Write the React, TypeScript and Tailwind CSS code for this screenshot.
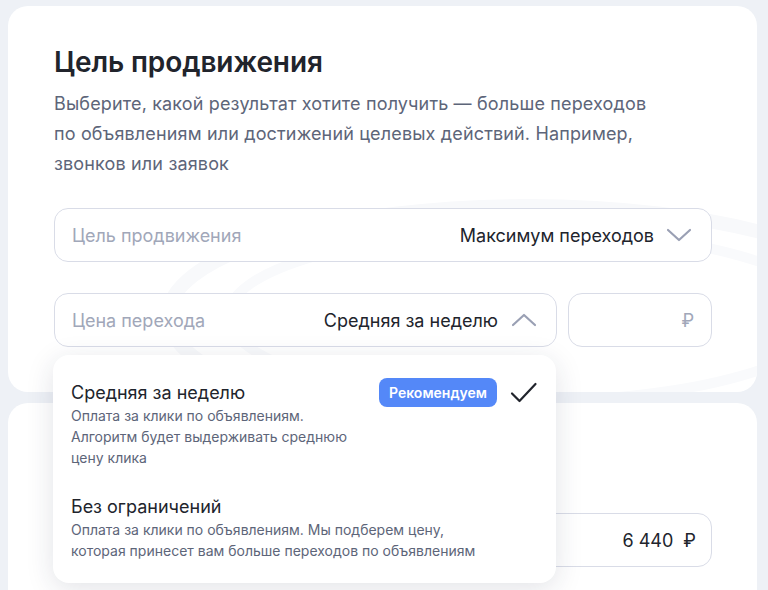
import React from "react";

const Chevron = ({ up = false }: { up?: boolean }) => (
  <svg width="26" height="16" viewBox="0 0 26 16" fill="none" className="shrink-0">
    <path
      d={up ? "M2 13 L13 3 L24 13" : "M2 3 L13 13 L24 3"}
      stroke="#9aa0b4"
      strokeWidth="2.2"
      strokeLinecap="round"
      strokeLinejoin="round"
    />
  </svg>
);

const Check = () => (
  <svg width="28" height="24" viewBox="0 0 28 24" fill="none">
    <path d="M2 12.5 L9.5 20 L25.5 3" stroke="#21242c" strokeWidth="2.2" strokeLinecap="round" strokeLinejoin="round" />
  </svg>
);

export default function App() {
  return (
    <div
      className="w-[768px] h-[590px] overflow-hidden bg-[#eef1f6] pl-[8px] pr-[11px] pt-[6px] flex flex-col gap-[11px] relative"
      style={{ fontFamily: "Inter, 'Noto Sans', sans-serif" }}
    >
      {/* Card 1 */}
      <div className="h-[386px] shrink-0 rounded-[20px] bg-white pl-[46px] pr-[45px] pt-[38px] relative overflow-hidden">
        <svg className="absolute left-0 top-0 pointer-events-none" width="749" height="386" viewBox="0 0 749 386" fill="none">
          <ellipse cx="520" cy="310" rx="360" ry="110" stroke="#f8f9fb" strokeWidth="14" />
          <ellipse cx="520" cy="310" rx="300" ry="85" stroke="#f9fafc" strokeWidth="10" />
        </svg>
        <h1 className="relative text-[28px] leading-[36px] font-semibold text-[#21242c] tracking-[-0.1px]">
          Цель продвижения
        </h1>
        <p className="relative mt-[9px] text-[18px] leading-[30px] text-[#5d6579] tracking-[0.15px]">
          Выберите, какой результат хотите получить — больше переходов
          <br />
          по объявлениям или достижений целевых действий. Например,
          <br />
          звонков или заявок
        </p>
        <div className="relative mt-[29px] h-[54px] rounded-[14px] border border-[#d9dce7] bg-white flex items-center pl-[17px] pr-[19px]">
          <span className="text-[18px] text-[#a1a7b9]">Цель продвижения</span>
          <span className="ml-auto text-[18px] text-[#21242c]">Максимум переходов</span>
          <span className="ml-[12px]"><Chevron /></span>
        </div>
        <div className="relative mt-[31px] flex gap-[11px]">
          <div className="w-[503px] h-[54px] rounded-[14px] border border-[#d9dce7] bg-white flex items-center pl-[17px] pr-[19px]">
            <span className="text-[18px] text-[#a1a7b9]">Цена перехода</span>
            <span className="ml-auto text-[18px] text-[#21242c]">Средняя за неделю</span>
            <span className="ml-[13px]"><Chevron up /></span>
          </div>
          <div className="flex-1 h-[54px] rounded-[14px] border border-[#d9dce7] bg-white flex items-center justify-end pr-[17px]">
            <span className="text-[18px] text-[#a1a7b9]">₽</span>
          </div>
        </div>
      </div>

      {/* Card 2 */}
      <div className="flex-1 rounded-t-[20px] bg-white pl-[45px] pr-[45px] pt-[110px]">
        <div className="h-[54px] rounded-[14px] border border-[#d9dce7] bg-white flex items-center justify-end pr-[15px]">
          <span className="text-[18px] text-[#21242c]">6 440&nbsp;&nbsp;₽</span>
        </div>
      </div>

      {/* Dropdown */}
      <div className="absolute left-[53px] top-[355px] w-[503px] h-[228px] rounded-[16px] bg-white shadow-[0_6px_28px_rgba(30,40,70,0.13)] pl-[18px] pr-[18px] pt-[26px]">
        <div className="flex items-start">
          <div className="flex-1">
            <div className="text-[18px] leading-[24px] text-[#21242c]">Средняя за неделю</div>
            <div className="text-[14px] leading-[21px] text-[#5d6579]">
              Оплата за клики по объявлениям.
              <br />
              Алгоритм будет выдерживать среднюю
              <br />
              цену клика
            </div>
          </div>
          <div className="flex items-center gap-[13px] -mt-[3px]">
            <span className="h-[29px] px-[10px] rounded-[8px] bg-[#5488f8] text-white text-[14px] font-semibold flex items-center">
              Рекомендуем
            </span>
            <Check />
          </div>
        </div>
        <div className="mt-[27px]">
          <div className="text-[18px] leading-[24px] text-[#21242c]">Без ограничений</div>
          <div className="text-[14px] leading-[21px] text-[#5d6579]">
            Оплата за клики по объявлениям. Мы подберем цену,
            <br />
            которая принесет вам больше переходов по объявлениям
          </div>
        </div>
      </div>
    </div>
  );
}
